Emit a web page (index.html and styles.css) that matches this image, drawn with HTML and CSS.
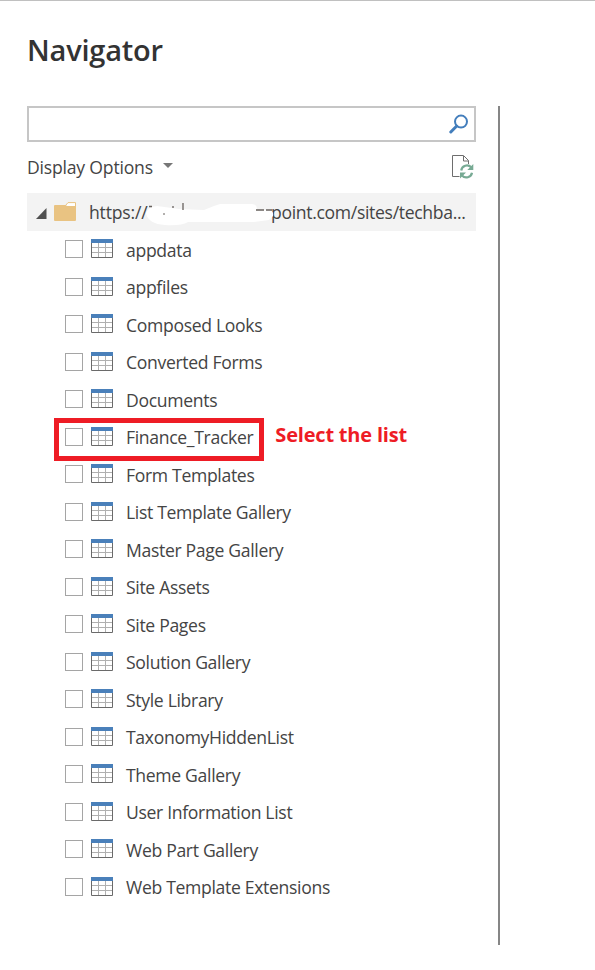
FILE: index.html
```
<!DOCTYPE html>
<html lang="en">
<head>
<meta charset="utf-8">
<title>Navigator</title>
<link rel="stylesheet" href="styles.css">
</head>
<body>
<svg class="defs" width="0" height="0" aria-hidden="true">
  <symbol id="table" viewBox="0 0 22 19">
    <path d="M1 4h20v14H1z" fill="#fff"/>
    <path d="M7.5 4v14M14.5 4v14M1 8.5h20M1 13.5h20" stroke="#b0b0b0" fill="none"/>
    <path d="M.5 4v14.5h21V4" stroke="#6a6a6a" fill="none"/>
    <path d="M0 0h22v4H0z" fill="#4a80ba"/>
  </symbol>
</svg>
<main class="dialog">
  <section class="panel">
    <h1 class="title">Navigator</h1>
    <div class="search">
      <svg width="20" height="20" viewBox="0 0 20 20" fill="none" stroke="#437ebc">
        <circle cx="12" cy="7.6" r="6" stroke-width="2"/>
        <path d="M7.7 12 1.8 18" stroke-width="3" stroke-linecap="round"/>
      </svg>
    </div>
    <div class="toolbar">
      <span class="options">Display Options</span>
      <svg class="caret" width="10" height="5" viewBox="0 0 10 5"><path d="M0 0h10L5 5z" fill="#777"/></svg>
      <svg class="refresh" width="22" height="24" viewBox="0 0 22 24" fill="none">
        <path d="M7.5 21.5h-7V.5h11l5 5V9" stroke="#6e6e6e"/>
        <path d="M11.5 1v5h5" stroke="#6e6e6e"/>
        <g stroke="#77aa94" stroke-width="2.2">
          <path d="M9.2 15.5a5.8 5.8 0 0 1 10-3.2"/>
          <path d="M20 17.7a5.8 5.8 0 0 1-10 2.8"/>
        </g>
        <path d="M21.3 9v6h-6zM8 23.5v-6h6z" fill="#77aa94"/>
      </svg>
    </div>
    <div class="root">
      <svg class="expander" width="11" height="11" viewBox="0 0 11 11"><path d="M10.5 0v11H0z" fill="#505050"/></svg>
      <svg class="folder" width="22" height="19" viewBox="0 0 22 19">
        <path d="M11.5 3.5 14 .6h7.5v4" fill="#fff" stroke="#e9c382"/>
        <path d="M0 4q0-1 1-1h10.5l1.5 1h9v14q0 1-1 1H1q-1 0-1-1z" fill="#e9c382"/>
      </svg>
      <span class="scheme">https://</span>
      <span class="address">point.com/sites/techba...</span>
      <svg class="redaction" width="130" height="26" viewBox="0 0 130 26">
        <path d="M1 11Q3 5 12 4l22 3 25 1 10-4 6-2h32q5 0 5 6l12 0q5 1 4 6l-4 4-16 2H57l-14 0Q36 24 20 23 3 22 1 11z" fill="#fff"/>
        <path d="M4 4.5h3M28 4v2M38 1v7M111 8h8M121 8h6" stroke="#67615d" stroke-width="1.3"/>
        <path d="M18 12h2" stroke="#67615d"/>
      </svg>
    </div>
    <ul class="list">
      <li class="row"><i class="check"></i><svg class="table"><use href="#table"/></svg><span>appdata</span></li>
      <li class="row"><i class="check"></i><svg class="table"><use href="#table"/></svg><span>appfiles</span></li>
      <li class="row"><i class="check"></i><svg class="table"><use href="#table"/></svg><span>Composed Looks</span></li>
      <li class="row"><i class="check"></i><svg class="table"><use href="#table"/></svg><span>Converted Forms</span></li>
      <li class="row"><i class="check"></i><svg class="table"><use href="#table"/></svg><span>Documents</span></li>
      <li class="row marked"><i class="check"></i><svg class="table"><use href="#table"/></svg><span>Finance_Tracker</span><b class="note">Select the list</b></li>
      <li class="row"><i class="check"></i><svg class="table"><use href="#table"/></svg><span>Form Templates</span></li>
      <li class="row"><i class="check"></i><svg class="table"><use href="#table"/></svg><span>List Template Gallery</span></li>
      <li class="row"><i class="check"></i><svg class="table"><use href="#table"/></svg><span>Master Page Gallery</span></li>
      <li class="row"><i class="check"></i><svg class="table"><use href="#table"/></svg><span>Site Assets</span></li>
      <li class="row"><i class="check"></i><svg class="table"><use href="#table"/></svg><span>Site Pages</span></li>
      <li class="row"><i class="check"></i><svg class="table"><use href="#table"/></svg><span>Solution Gallery</span></li>
      <li class="row"><i class="check"></i><svg class="table"><use href="#table"/></svg><span>Style Library</span></li>
      <li class="row"><i class="check"></i><svg class="table"><use href="#table"/></svg><span>TaxonomyHiddenList</span></li>
      <li class="row"><i class="check"></i><svg class="table"><use href="#table"/></svg><span>Theme Gallery</span></li>
      <li class="row"><i class="check"></i><svg class="table"><use href="#table"/></svg><span>User Information List</span></li>
      <li class="row"><i class="check"></i><svg class="table"><use href="#table"/></svg><span>Web Part Gallery</span></li>
      <li class="row"><i class="check"></i><svg class="table"><use href="#table"/></svg><span>Web Template Extensions</span></li>
    </ul>
  </section>
  <div class="divider"></div>
</main>
</body>
</html>
```
FILE: styles.css
```
*, *::before { box-sizing: border-box; }
body {
  margin: 0;
  background: #fff;
  color: #444;
  font: 17.6px/24px "Open Sans", "Segoe UI", sans-serif;
  letter-spacing: -0.33px;
}
.defs { position: absolute; }
.dialog {
  display: flex;
  height: 970px;
  padding-left: 27px;
  border-top: 1px solid #c0c0c0;
  overflow: hidden;
}
.panel { width: 449px; }
.title {
  margin: 29px 0 36px;
  font-size: 29px;
  line-height: 40px;
  font-weight: 600;
  letter-spacing: -0.2px;
  color: #333;
}
.search {
  display: flex;
  justify-content: flex-end;
  height: 36px;
  padding: 6px 5px 0 0;
  border: 2px solid #c6c6c6;
}
.toolbar { display: flex; align-items: center; height: 51px; padding-bottom: 2px; }
.options { letter-spacing: -0.2px; }
.caret { margin-left: 10px; margin-top: -2px; }
.refresh { margin-left: auto; margin-right: 2px; }
.root {
  position: relative;
  display: flex;
  align-items: center;
  height: 38px;
  padding-left: 9px;
  background: #f3f3f3;
}
.expander { margin-right: 7px; margin-top: 2px; }
.folder { margin-right: 13px; margin-top: -1px; }
.scheme { width: 182px; letter-spacing: -0.2px; }
.scheme, .address { white-space: nowrap; }
.redaction { position: absolute; left: 118px; top: 9px; }
.list { margin: -1px 0 0; padding: 0; list-style: none; }
.row {
  position: relative;
  display: flex;
  align-items: center;
  height: 37.5px;
  padding-left: 38px;
}
.row span { margin-top: 2.4px; white-space: nowrap; }
.check {
  width: 18px;
  height: 18px;
  margin: 1px 8px 0 0;
  border: 1px solid #a5a5a5;
  background: #fff;
}
.table { width: 22px; height: 19px; margin-right: 13px; }
.marked::before {
  content: "";
  position: absolute;
  left: 27px;
  top: 0;
  width: 210px;
  height: 43px;
  border: 5px solid #ee1c25;
}
.marked .note {
  margin: -3px 0 0 22px;
  font-size: 20px;
  font-weight: 700;
  letter-spacing: -0.2px;
  color: #ee1c25;
}
.divider { width: 2px; height: 839px; margin: 105px 0 0 22px; background: #868686; }
```
